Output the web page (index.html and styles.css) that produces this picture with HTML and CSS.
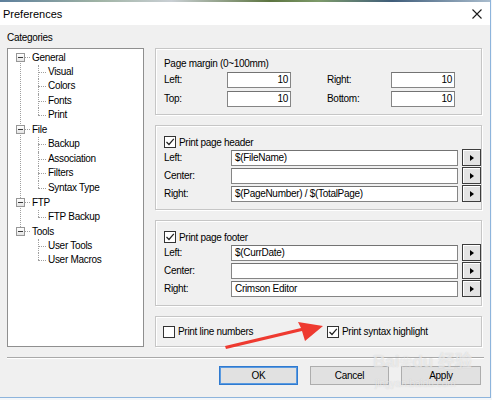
FILE: index.html
```html
<!DOCTYPE html>
<html>
<head>
<meta charset="utf-8">
<title>Preferences</title>
<link rel="stylesheet" href="styles.css">
</head>
<body>
<div class="window">
  <div class="strip"></div>
  <div class="titlebar">
    <span class="title">Preferences</span>
    <svg class="close" width="10" height="10" viewBox="0 0 10 10"><path d="M0.5 0.5 L9.5 9.5 M9.5 0.5 L0.5 9.5" stroke="#1a1a1a" stroke-width="1.1" fill="none"/></svg>
  </div>
  <div class="content">
    <div class="main">
      <div class="cat-label">Categories</div>
      <ul class="tree">
        <li class="node">
          <div class="row"><span class="box"></span><span class="hline"></span><span class="label">General</span></div>
          <ul class="kids">
            <li class="kid">Visual</li>
            <li class="kid">Colors</li>
            <li class="kid">Fonts</li>
            <li class="kid">Print</li>
          </ul>
        </li>
        <li class="node">
          <div class="row"><span class="box"></span><span class="hline"></span><span class="label">File</span></div>
          <ul class="kids">
            <li class="kid">Backup</li>
            <li class="kid">Association</li>
            <li class="kid">Filters</li>
            <li class="kid">Syntax Type</li>
          </ul>
        </li>
        <li class="node">
          <div class="row"><span class="box"></span><span class="hline"></span><span class="label">FTP</span></div>
          <ul class="kids">
            <li class="kid">FTP Backup</li>
          </ul>
        </li>
        <li class="node">
          <div class="row"><span class="box"></span><span class="hline"></span><span class="label">Tools</span></div>
          <ul class="kids">
            <li class="kid">User Tools</li>
            <li class="kid">User Macros</li>
          </ul>
        </li>
      </ul>
      <div class="right">
        <div class="group g-margin">
          <div class="gtitle">Page margin (0~100mm)</div>
          <div class="margin-grid">
            <span class="lbl">Left:</span><div class="input num">10</div><span></span><span class="lbl">Right:</span><div class="input num">10</div>
            <span class="lbl">Top:</span><div class="input num">10</div><span></span><span class="lbl">Bottom:</span><div class="input num">10</div>
          </div>
        </div>
        <div class="group g-hf">
          <div class="chk-row"><span class="chk on"><svg width="10" height="10" viewBox="0 0 10 10"><path d="M1.5 5 L4 7.5 L8.8 1.8" stroke="#222" stroke-width="1.2" fill="none"/></svg></span><span>Print page header</span></div>
          <div class="hf-grid">
            <span class="lbl">Left:</span><div class="input">$(FileName)</div><div class="arr"><span class="tri"></span></div>
            <span class="lbl">Center:</span><div class="input"></div><div class="arr"><span class="tri"></span></div>
            <span class="lbl">Right:</span><div class="input">$(PageNumber) / $(TotalPage)</div><div class="arr"><span class="tri"></span></div>
          </div>
        </div>
        <div class="group g-hf g-footer">
          <div class="chk-row"><span class="chk on"><svg width="10" height="10" viewBox="0 0 10 10"><path d="M1.5 5 L4 7.5 L8.8 1.8" stroke="#222" stroke-width="1.2" fill="none"/></svg></span><span>Print page footer</span></div>
          <div class="hf-grid">
            <span class="lbl">Left:</span><div class="input">$(CurrDate)</div><div class="arr"><span class="tri"></span></div>
            <span class="lbl">Center:</span><div class="input"></div><div class="arr"><span class="tri"></span></div>
            <span class="lbl">Right:</span><div class="input">Crimson Editor</div><div class="arr"><span class="tri"></span></div>
          </div>
        </div>
        <div class="group g-opts">
          <div class="chk-row opt1"><span class="chk"></span><span>Print line numbers</span></div>
          <div class="chk-row"><span class="chk on"><svg width="10" height="10" viewBox="0 0 10 10"><path d="M1.5 5 L4 7.5 L8.8 1.8" stroke="#222" stroke-width="1.2" fill="none"/></svg></span><span>Print syntax highlight</span></div>
        </div>
      </div>
    </div>
    <div class="sep"></div>
    <div class="buttons">
      <button class="btn default">OK</button>
      <button class="btn">Cancel</button>
      <button class="btn wide">Apply</button>
    </div>
  </div>
  <svg class="arrow" width="491" height="398" viewBox="0 0 491 398"><polygon points="226,349 302,331 305,341 323,326 298,322 301,328 225,346" fill="#ee3a30"/></svg>
  <div class="watermark"><div class="wm-big">Bai<span class="paw">&#x2740;</span>du 经验</div><div class="wm-small">jingyan.baidu.com</div></div>
</div>
</body>
</html>
```

FILE: styles.css
```css
html, body {
  margin: 0;
  padding: 0;
}
body {
  background: #f3f6f9;
  font-family: "Liberation Sans", Arial, sans-serif;
  font-size: 10px;
  letter-spacing: -0.3px;
  color: #000;
}
.window {
  position: relative;
  width: 490px;
  height: 397px;
  background: #f0f0f0;
  border-right: 1px solid #8db4dc;
  border-bottom: 1px solid #8db4dc;
  overflow: hidden;
}
.strip {
  height: 2px;
  background: linear-gradient(90deg, #5d7f9c 0%, #9fb3a4 20%, #c9cfd4 35%, #5c7440 55%, #7d9a6a 65%, #3f5d7a 80%, #a9bccd 100%);
}
.titlebar {
  height: 23px;
  background: #fff;
  display: flex;
  align-items: center;
  justify-content: space-between;
  padding-left: 3px;
}
.title {
  font-size: 11px;
  letter-spacing: 0;
  color: #000;
}
.close {
  margin-right: 8px;
  display: block;
}
.content {
  padding: 6px 6px 0 7px;
}
.main {
  display: grid;
  grid-template-columns: 137px 327px;
  grid-template-rows: 17px 299px;
  column-gap: 11px;
}
.cat-label {
  grid-column: 1;
  grid-row: 1;
  line-height: 14px;
}
.tree {
  grid-column: 1;
  grid-row: 2;
  list-style: none;
  margin: 0;
  padding: 1px 0 0;
  background: #fff;
  border: 1px solid #8f8f8f;
  box-sizing: border-box;
}
.node {
  position: relative;
}
.node:not(:last-child)::before {
  content: "";
  position: absolute;
  left: 12px;
  top: 7px;
  bottom: -7px;
  border-left: 1px dotted #a0a0a0;
}
.row {
  height: 14.5px;
  display: flex;
  align-items: center;
}
.box {
  position: relative;
  z-index: 1;
  margin-left: 8px;
  width: 9px;
  height: 9px;
  box-sizing: border-box;
  border: 1px solid #979797;
  background: linear-gradient(#ffffff, #e4e4e4);
}
.box::after {
  content: "";
  position: absolute;
  left: 1px;
  top: 3px;
  width: 5px;
  height: 1px;
  background: #3a3a3a;
}
.hline {
  width: 5px;
  height: 0;
  border-top: 1px dotted #a0a0a0;
}
.label {
  margin-left: 2px;
}
.kids {
  list-style: none;
  margin: 0;
  padding: 0;
}
.kid {
  position: relative;
  height: 14.5px;
  line-height: 14.5px;
  padding-left: 40px;
}
.kid::before {
  content: "";
  position: absolute;
  left: 30px;
  top: 7px;
  width: 8px;
  border-top: 1px dotted #a0a0a0;
}
.kid::after {
  content: "";
  position: absolute;
  left: 30px;
  top: 0;
  height: 100%;
  border-left: 1px dotted #a0a0a0;
}
.kid:last-child::after {
  height: 7px;
}
.right {
  grid-column: 2;
  grid-row: 2;
  display: flex;
  flex-direction: column;
  gap: 10px;
}
.group {
  box-sizing: border-box;
  border: 1px solid #c6c6c6;
  box-shadow: inset 1px 1px 0 #fff, 1px 1px 0 #fff;
  padding-left: 8px;
}
.g-margin {
  height: 67px;
  padding-top: 8px;
}
.gtitle {
  line-height: 14px;
}
.margin-grid {
  margin-top: 1px;
  display: grid;
  grid-template-columns: 63px 64px 36px 64px 64px;
  grid-auto-rows: 16px;
  row-gap: 3px;
  align-items: center;
}
.lbl {
  line-height: 14px;
}
.input {
  box-sizing: border-box;
  height: 16px;
  background: #fff;
  border: 1px solid #858585;
  border-top-color: #737373;
  padding: 0 3px;
  line-height: 14px;
  white-space: nowrap;
  overflow: hidden;
}
.input.num {
  text-align: right;
  padding-right: 2px;
}
.g-hf {
  height: 85px;
  padding-top: 9px;
}
.g-footer {
  height: 86px;
}
.chk-row {
  display: flex;
  align-items: center;
  height: 14px;
}
.chk {
  box-sizing: border-box;
  width: 12px;
  height: 12px;
  border: 1px solid #333;
  background: #fff;
  margin-right: 3px;
  display: flex;
  align-items: center;
  justify-content: center;
}
.chk svg {
  display: block;
}
.hf-grid {
  margin-top: 1px;
  display: grid;
  grid-template-columns: 63px 227px 19px;
  column-gap: 4px;
  grid-auto-rows: 16px;
  row-gap: 2px;
  align-items: center;
}
.arr {
  box-sizing: border-box;
  height: 17px;
  margin-top: -1px;
  border: 1px solid #3d3d3d;
  background: #e3e3e3;
  box-shadow: inset 1px 1px 0 #fff;
  display: flex;
  align-items: center;
  justify-content: center;
}
.tri {
  width: 0;
  height: 0;
  border-left: 4px solid #000;
  border-top: 3.5px solid transparent;
  border-bottom: 3.5px solid transparent;
}
.g-opts {
  height: 31px;
  display: flex;
  align-items: center;
  padding-left: 7px;
}
.opt1 {
  width: 164px;
}
.sep {
  margin-top: 10px;
  height: 1px;
  background: #a9a9a9;
  border-bottom: 1px solid #fff;
}
.buttons {
  margin-top: 7px;
  display: flex;
  justify-content: flex-end;
  gap: 12px;
  padding-right: 3px;
}
.btn {
  box-sizing: border-box;
  width: 79px;
  height: 19px;
  margin: 0;
  padding: 0;
  background: #e1e1e1;
  border: 1px solid #adadad;
  font-family: "Liberation Sans", Arial, sans-serif;
  font-size: 10px;
  letter-spacing: -0.3px;
  color: #000;
}
.btn.wide {
  width: 80px;
}
.btn.default {
  border-color: #2f7ad0;
  box-shadow: inset 0 0 0 1px #5a9ae0;
}
.arrow {
  position: absolute;
  left: 0;
  top: 0;
  pointer-events: none;
}
.watermark {
  position: absolute;
  left: 373px;
  top: 350px;
  pointer-events: none;
  color: rgba(255, 255, 255, 0.55);
  text-shadow: 0 0 1px rgba(150, 150, 150, 0.4);
  letter-spacing: 0;
  font-family: "Liberation Sans", "Noto Sans CJK SC", sans-serif;
}
.wm-big {
  height: 24px;
  font-size: 17px;
  font-weight: bold;
  line-height: 24px;
  white-space: nowrap;
}
.paw {
  font-size: 13px;
}
.wm-small {
  height: 12px;
  margin-top: 4px;
  font-size: 10px;
  line-height: 12px;
  padding-left: 2px;
  white-space: nowrap;
}
```
